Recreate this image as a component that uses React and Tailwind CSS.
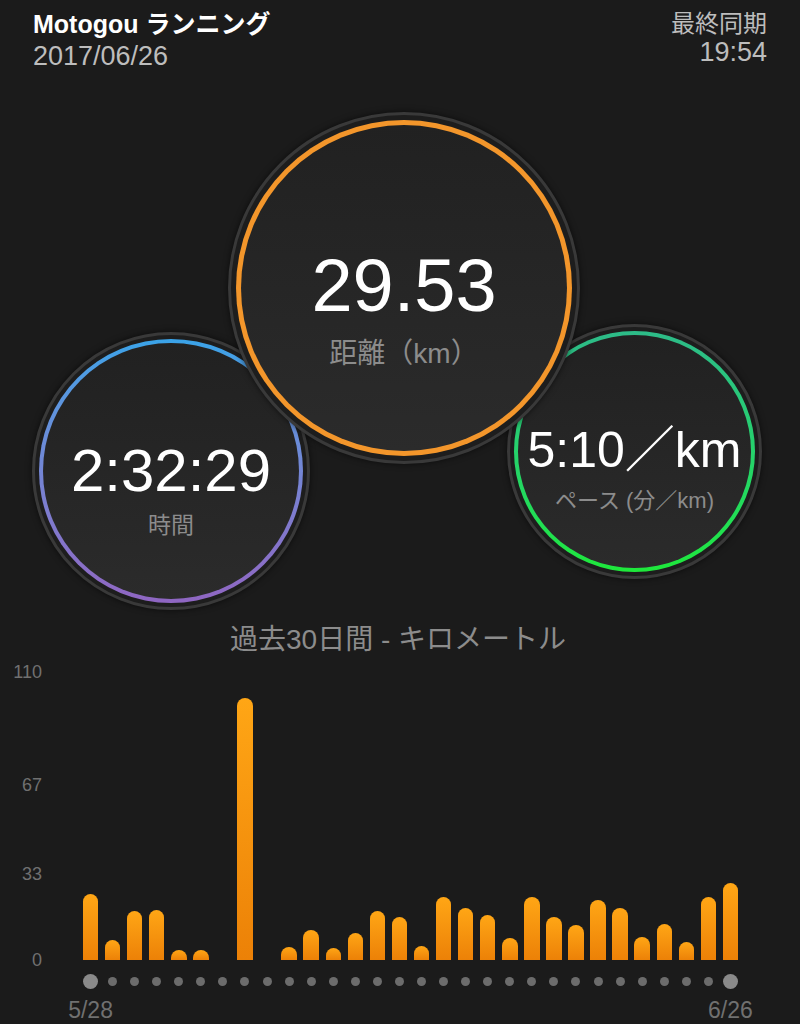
import React from "react";

// km per day, last 30 days (5/28 → 6/26)
const DAYS = [
  25.2, 7.6, 18.7, 19.1, 3.8, 3.8, 0, 100.1, 0, 5.0,
  11.5, 4.6, 10.3, 18.7, 16.4, 5.3, 24.1, 19.9, 17.2, 8.4,
  24.1, 16.4, 13.4, 22.9, 19.9, 8.8, 13.8, 6.9, 24.1, 29.53,
];
const PX_PER_KM = 2.618;
const TICKS = [110, 67, 33, 0];

function Ring({ className, ringClass, innerClass, children }) {
  return (
    <div className={`absolute rounded-full border-[3px] border-[#393939] bg-[#1d1d1d] shadow-[0_0_6px_rgba(0,0,0,0.6)] ${className}`}>
      <div className={`h-full w-full rounded-full ${ringClass}`}>
        <div className={`flex h-full w-full flex-col items-center rounded-full bg-linear-to-b from-[#212121] to-[#2b2b2b] ${innerClass}`}>
          {children}
        </div>
      </div>
    </div>
  );
}

export default function App() {
  return (
    <div className="h-[1024px] w-[800px] overflow-hidden bg-[#1b1b1b] font-['Liberation_Sans','Noto_Sans_CJK_JP',sans-serif]">
      {/* header */}
      <div className="flex h-[80px] justify-between px-[33px] pt-[10px]">
        <div>
          <div className="text-[25px] font-bold leading-[28px] text-white">Motogou ランニング</div>
          <div className="mt-[2px] text-[27px] leading-[33px] text-[#bdbdbd]">2017/06/26</div>
        </div>
        <div className="text-right text-[#bdbdbd]">
          <div className="text-[24px] leading-[28px]">最終同期</div>
          <div className="text-[27px] leading-[29px]">19:54</div>
        </div>
      </div>

      {/* summary circles */}
      <div className="relative h-[540px]">
        <Ring
          className="left-[32px] top-[252px] h-[278px] w-[278px] p-[4px]"
          ringClass="bg-linear-to-b from-[#39a3e8] to-[#8f66c2] p-[4px]"
          innerClass="pt-[98px]"
        >
          <div className="text-[60px] leading-none text-white">2:32:29</div>
          <div className="mt-[13px] text-[23px] leading-none text-[#8c8c8c]">時間</div>
        </Ring>

        <Ring
          className="left-[507px] top-[244px] h-[255px] w-[255px] p-[4px]"
          ringClass="bg-linear-to-b from-[#2dbb88] to-[#1ee83a] p-[4px]"
          innerClass="pt-[90px]"
        >
          <div className="whitespace-nowrap text-[50px] leading-none text-white">5:10／km</div>
          <div className="mt-[15px] whitespace-nowrap text-[22px] leading-none text-[#8c8c8c]">ペース (分／km)</div>
        </Ring>

        <Ring
          className="left-[228px] top-[32px] h-[352px] w-[352px] p-[5px]"
          ringClass="bg-[#f3962b] p-[5px]"
          innerClass="pt-[124px]"
        >
          <div className="text-[74px] leading-none text-white">29.53</div>
          <div className="mt-[17px] text-[28px] leading-none text-[#8c8c8c]">距離（km）</div>
        </Ring>
      </div>

      {/* chart */}
      <div className="h-[40px] pr-[4px] text-center text-[28px] leading-[40px] text-[#8c8c8c]">
        過去30日間 - キロメートル
      </div>

      <div className="relative h-[300px]">
        {TICKS.map((t) => (
          <div
            key={t}
            className="absolute left-0 w-[42px] text-right text-[18px] leading-[18px] text-[#707070]"
            style={{ top: 300 - t * PX_PER_KM - 9 }}
          >
            {t}
          </div>
        ))}
        <div className="ml-[79.5px] grid h-full w-[662px] grid-cols-30 items-end">
          {DAYS.map((km, i) => (
            <div key={i} className="flex justify-center">
              {km > 0 && (
                <div
                  className="w-[15.5px] rounded-t-full bg-linear-to-b from-[#ffa615] to-[#ec8107]"
                  style={{ height: km * PX_PER_KM }}
                />
              )}
            </div>
          ))}
        </div>
      </div>

      <div className="ml-[79.5px] grid h-[43px] w-[662px] grid-cols-30 items-center">
        {DAYS.map((_, i) => (
          <div key={i} className="flex justify-center">
            {i === 0 || i === DAYS.length - 1 ? (
              <div className="h-[15px] w-[15px] rounded-full bg-[#8a8a8a]" />
            ) : (
              <div className="h-[9px] w-[9px] rounded-full bg-[#6c6c6c]" />
            )}
          </div>
        ))}
      </div>

      <div className="ml-[79.5px] grid w-[662px] grid-cols-30 text-[23px] leading-[14px] text-[#707070]">
        <div className="col-start-1 flex justify-center whitespace-nowrap">5/28</div>
        <div className="col-start-30 flex justify-center whitespace-nowrap">6/26</div>
      </div>
    </div>
  );
}
